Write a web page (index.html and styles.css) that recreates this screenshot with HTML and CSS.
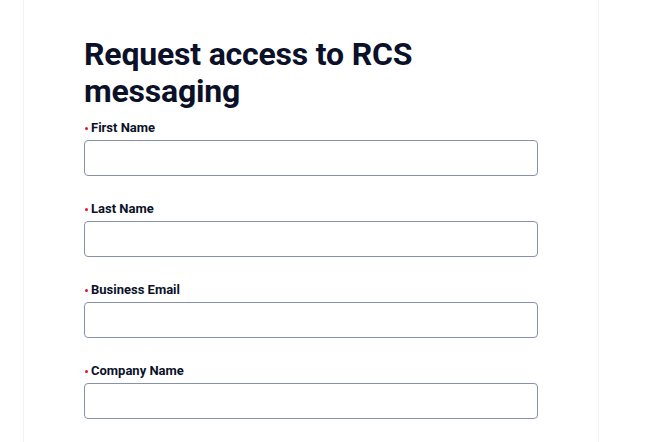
FILE: index.html
```html
<!DOCTYPE html>
<html>
<head>
<meta charset="utf-8">
<link rel="stylesheet" href="styles.css">
</head>
<body>
<div class="card">
  <h1 class="title">Request access to RCS messaging</h1>
  <form class="form">
    <div class="field">
      <label class="label"><span class="req"></span>First Name</label>
      <input class="input" type="text">
    </div>
    <div class="field">
      <label class="label"><span class="req"></span>Last Name</label>
      <input class="input" type="text">
    </div>
    <div class="field">
      <label class="label"><span class="req"></span>Business Email</label>
      <input class="input" type="text">
    </div>
    <div class="field">
      <label class="label"><span class="req"></span>Company Name</label>
      <input class="input" type="text">
    </div>
  </form>
</div>
</body>
</html>
```
FILE: styles.css
```css
html, body {
  margin: 0;
  padding: 0;
  background: #fff;
  height: 100%;
  overflow: hidden;
}
body {
  font-family: Roboto, "Liberation Sans", sans-serif;
  color: #0b1128;
}
.card {
  margin-left: 23px;
  width: 576px;
  min-height: 100%;
  border-left: 1px solid #f2f2f3;
  border-right: 1px solid #f2f2f3;
  padding: 36px 0 0 60px;
  box-sizing: border-box;
}
.title {
  margin: 0 0 10px;
  font-size: 32px;
  line-height: 37px;
  font-weight: 700;
  width: 400px;
  letter-spacing: -0.2px;
}
.form {
  display: flex;
  flex-direction: column;
  gap: 25px;
  width: 454px;
}
.field {
  display: flex;
  flex-direction: column;
  gap: 4px;
}
.label {
  display: flex;
  align-items: center;
  font-size: 13px;
  line-height: 16px;
  font-weight: 700;
}
.req {
  width: 3px;
  height: 3px;
  border-radius: 50%;
  background: #e0113a;
  margin-right: 3px;
  margin-left: 1px;
}
.input {
  height: 36px;
  box-sizing: border-box;
  border: 1px solid #8891aa;
  border-radius: 4px;
  background: #fff;
  margin: 0;
  padding: 0 12px;
}
```
